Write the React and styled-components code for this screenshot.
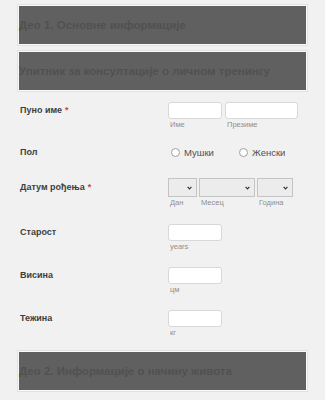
import React from "react";
import styled, { createGlobalStyle } from "styled-components";

const Global = createGlobalStyle`
  html, body { margin: 0; padding: 0; background: #f1f1f1; }
  body { font-family: "Liberation Sans", Arial, sans-serif; }
  * { box-sizing: border-box; }
`;

const Page = styled.div`
  width: 325px;
  height: 400px;
  overflow: hidden;
  padding: 5px 18px 0;
  background: #f1f1f1;
`;

const SectionHeader = styled.div`
  height: 40px;
  margin-top: ${(p) => p.$mt || 0}px;
  background: #606060;
  border: 1px solid #fafafa;
  box-shadow: 0 0 0 1px #e2e2e2;
  display: flex;
  align-items: center;
  padding-left: 0;
  color: #515151;
  font-weight: bold;
  font-size: 11.5px;
  white-space: nowrap;
`;

const Row = styled.div`
  display: flex;
  align-items: flex-start;
  margin-top: ${(p) => p.$mt}px;
`;

const Label = styled.div`
  width: 150px;
  padding-left: 2px;
  font-size: 9px;
  font-weight: bold;
  color: #3e3e3e;
  line-height: ${(p) => p.$lh || 16}px;
  white-space: nowrap;
`;

const Req = styled.span`
  color: #e5373a;
  margin-left: 3px;
`;

const Fields = styled.div`
  display: flex;
  gap: ${(p) => p.$gap || 3}px;
`;

const Field = styled.div`
  display: flex;
  flex-direction: column;
`;

const TextBox = styled.div`
  width: ${(p) => p.$w}px;
  height: 17px;
  background: #fff;
  border: 1px solid #d8d8d8;
  border-radius: 3px;
`;

const Sub = styled.div`
  font-size: 7.5px;
  color: #8f8f8f;
  line-height: 12px;
  padding-left: 2px;
`;

const SelectBox = styled.div`
  width: ${(p) => p.$w}px;
  height: 19px;
  background: #ececec;
  border: 1px solid #c4c4c4;
  display: flex;
  align-items: center;
  justify-content: flex-end;
  padding-right: 4px;
`;

const RadioGroup = styled.div`
  display: flex;
  align-items: center;
  padding-left: 3px;
  height: 14px;
`;

const RadioOpt = styled.div`
  display: flex;
  align-items: center;
  gap: 4px;
  width: ${(p) => p.$w}px;
  font-size: 9.5px;
  color: #505050;
`;

const Circle = styled.span`
  width: 9px;
  height: 9px;
  border-radius: 50%;
  border: 1px solid #a0a0a0;
  background: #fff;
  display: inline-block;
`;

const Chevron = () => (
  <svg width="5" height="4" viewBox="0 0 5 4">
    <path d="M0.6 0.8 L2.5 2.8 L4.4 0.8" fill="none" stroke="#333" strokeWidth="1.2" />
  </svg>
);

const SimpleRow = ({ label, sub, mt }) => (
  <Row $mt={mt}>
    <Label $lh={17}>{label}</Label>
    <Field>
      <TextBox $w={54} />
      <Sub>{sub}</Sub>
    </Field>
  </Row>
);

export default function App() {
  return (
    <Page>
      <Global />
      <SectionHeader>Део 1. Основне информације</SectionHeader>
      <SectionHeader $mt={6}>Упитник за консултације о личном тренингу</SectionHeader>

      <Row $mt={11}>
        <Label $lh={16}>
          Пуно име<Req>*</Req>
        </Label>
        <Fields $gap={3}>
          <Field>
            <TextBox $w={54} />
            <Sub>Име</Sub>
          </Field>
          <Field>
            <TextBox $w={73} />
            <Sub>Презиме</Sub>
          </Field>
        </Fields>
      </Row>

      <Row $mt={14}>
        <Label $lh={14}>Пол</Label>
        <RadioGroup>
          <RadioOpt $w={68}>
            <Circle />
            Мушки
          </RadioOpt>
          <RadioOpt>
            <Circle />
            Женски
          </RadioOpt>
        </RadioGroup>
      </Row>

      <Row $mt={19}>
        <Label $lh={18}>
          Датум рођења<Req>*</Req>
        </Label>
        <Fields $gap={2}>
          <Field>
            <SelectBox $w={29}><Chevron /></SelectBox>
            <Sub>Дан</Sub>
          </Field>
          <Field>
            <SelectBox $w={56}><Chevron /></SelectBox>
            <Sub>Месец</Sub>
          </Field>
          <Field>
            <SelectBox $w={36}><Chevron /></SelectBox>
            <Sub>Година</Sub>
          </Field>
        </Fields>
      </Row>

      <SimpleRow label="Старост" sub="years" mt={15} />
      <SimpleRow label="Висина" sub="цм" mt={14} />
      <SimpleRow label="Тежина" sub="кг" mt={14} />

      <SectionHeader $mt={12}>Део 2. Информације о начину живота</SectionHeader>
    </Page>
  );
}
